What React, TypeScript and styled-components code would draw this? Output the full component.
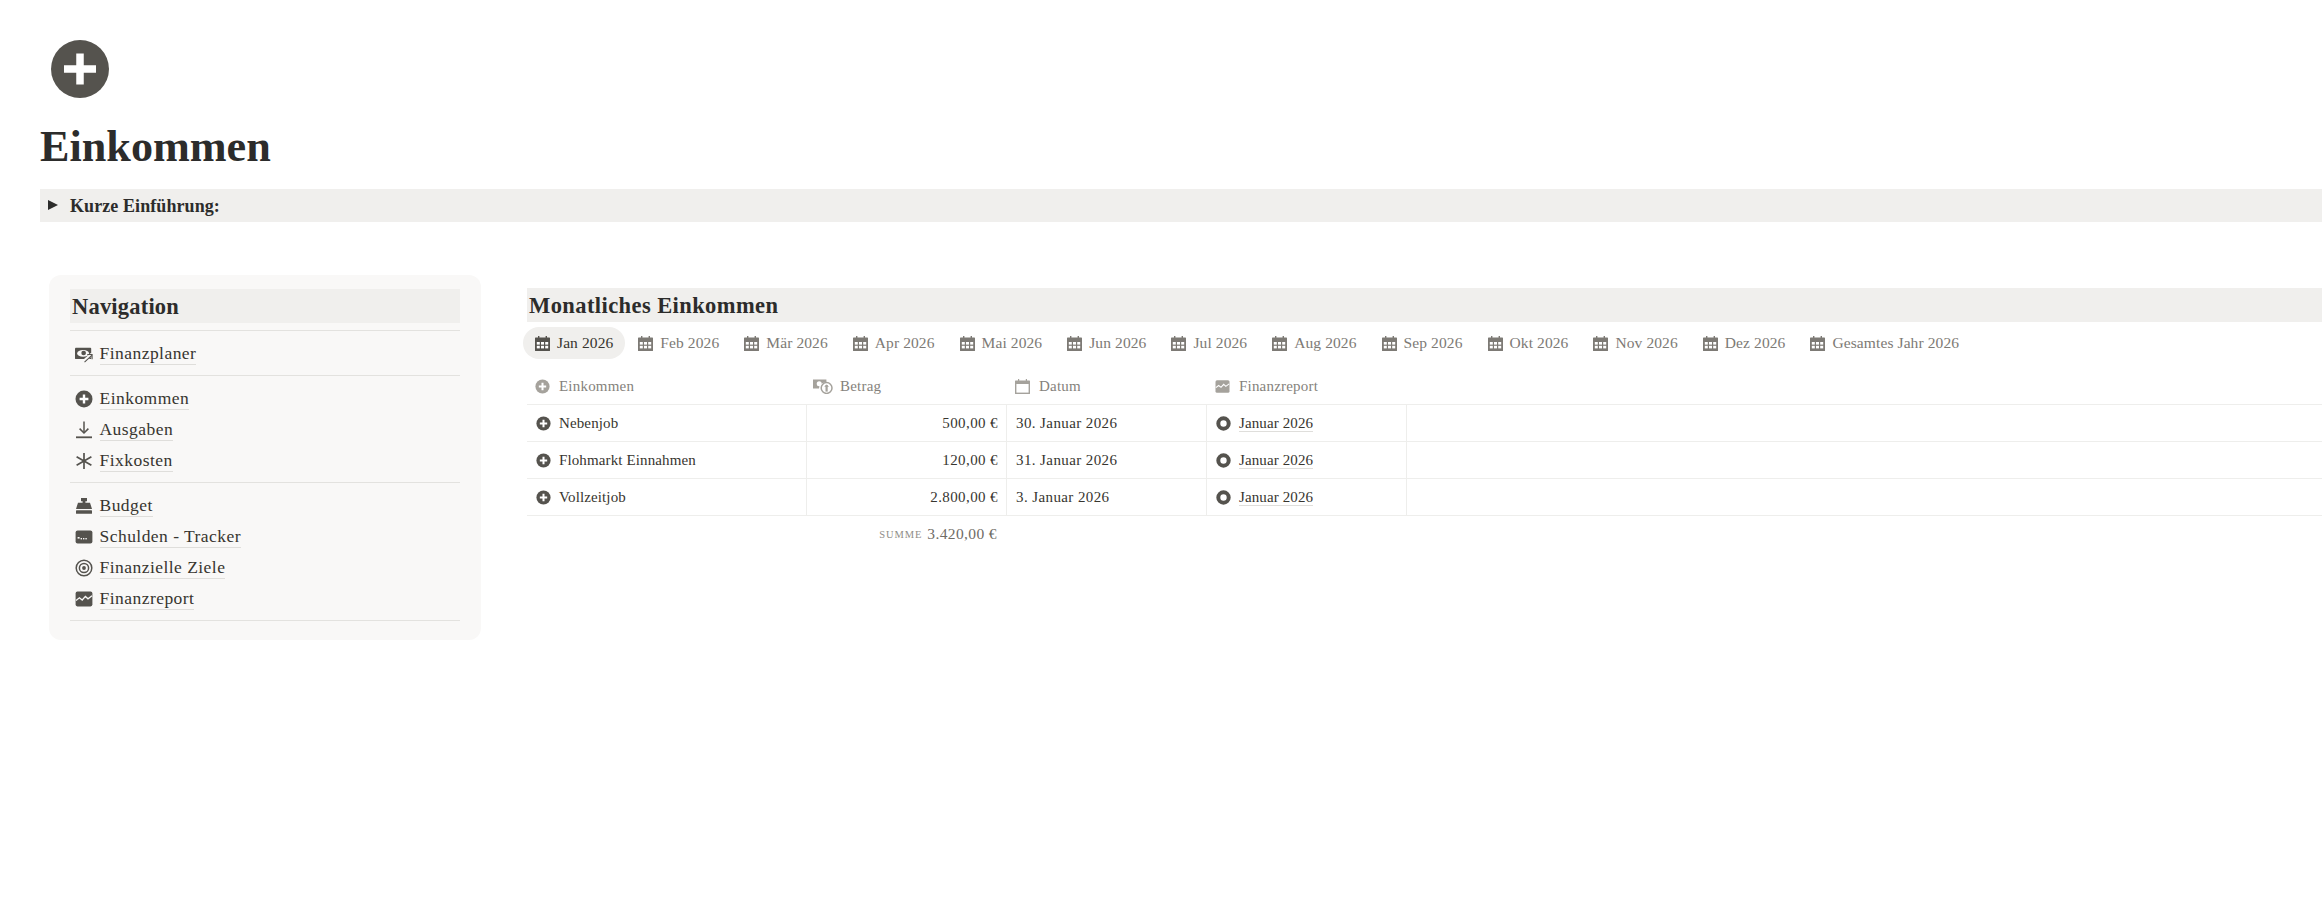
import React from "react";
import styled, { createGlobalStyle } from "styled-components";

const Global = createGlobalStyle`
  html, body { margin: 0; padding: 0; background: #fff; overflow: hidden; }
  body { font-family: "Liberation Serif", "Times New Roman", serif; color: #2c2c2b; }
`;

const Page = styled.div`
  width: 2322px; height: 912px; overflow: hidden; box-sizing: border-box;
  padding: 40px 0 0 40px; display: flex; flex-direction: column;
`;
const PageIcon = styled.div` margin-left: 11px; height: 58px; display: flex; `;
const Title = styled.h1`
  margin: 22px 0 0; font-size: 44.2px; line-height: 54px; font-weight: 700; color: #2c2c2b; height: 54px;
`;
const Callout = styled.div`
  margin-top: 15px; height: 33px; box-sizing: border-box; background: #f0efed; display: flex; align-items: center;
  padding: 2px 0 0 8px; font-size: 18px; font-weight: 700; letter-spacing: .08px; gap: 12px; color: #2c2c2b;
`;
const Triangle = styled.span`
  width: 0; height: 0; border-left: 10px solid #2c2c2b; border-top: 5.5px solid transparent; border-bottom: 5.5px solid transparent;
  margin-top: -4px;
`;
const Columns = styled.div` display: flex; margin-top: 53px; align-items: flex-start; `;
const Card = styled.aside`
  margin-left: 9px; width: 432px; height: 365px; box-sizing: border-box; background: #f9f8f7; border-radius: 12px;
  padding: 14px 21px 0; flex: none;
`;
const NavHeading = styled.h3`
  margin: 0 0 7px; height: 34px; background: #f0efed; font-size: 22.5px; line-height: 35px; font-weight: 700; padding-left: 2px; letter-spacing: .2px; color: #2c2c2b;
`;
const Rule = styled.div` height: 1px; background: #e3e2df; `;
const NavGroup = styled.div`
  display: flex; flex-direction: column; padding: 7px 0 6px;
`;
const NavRow = styled.div` height: 31px; display: flex; align-items: center; padding-left: 5px; gap: 6.5px; `;
const NavIconBox = styled.span` width: 18px; height: 18px; display: flex; flex: none; `;
const NavLink = styled.span`
  font-size: 17.5px; line-height: 21px; letter-spacing: .46px; color: #37352f; border-bottom: 1px solid #dfdedb;
`;
const Main = styled.section` margin-left: 46px; flex: 1; min-width: 0; margin-top: 13px; `;
const MainHeading = styled.h3`
  margin: 0; height: 34px; background: #f0efed; font-size: 22.5px; line-height: 35px; font-weight: 700; padding-left: 2px; letter-spacing: .42px; color: #2c2c2b;
`;
const Tabs = styled.div` display: flex; margin: 5px 0 0 -4px; height: 32px; `;
const Tab = styled.div<{ $active?: boolean }>`
  display: flex; align-items: center; height: 32px; padding: 0 12px; gap: 7px; border-radius: 16px; flex: none;
  font-size: 15.5px; letter-spacing: .1px; white-space: nowrap;
  background: ${(p) => (p.$active ? "#f0efed" : "transparent")};
  color: ${(p) => (p.$active ? "#37352f" : "#7d7a75")};
  margin-right: 1px;
`;
const Table = styled.div` margin-top: 11px; `;
const Row = styled.div<{ $head?: boolean }>`
  display: grid; grid-template-columns: 280px 200px 200px 200px 1fr;
  height: ${(p) => (p.$head ? "35px" : "37px")}; box-sizing: border-box;
  border-bottom: 1px solid #eeeeec;
`;
const HeadCell = styled.div<{ $tight?: boolean }>`
  display: flex; align-items: center; gap: ${(p) => (p.$tight ? "7px" : "9px")}; padding-left: ${(p) => (p.$tight ? "6px" : "8px")};
  color: #85827c; font-size: 15px; letter-spacing: .2px; padding-bottom: 1px;
`;
const Cell = styled.div<{ $right?: boolean; $line?: boolean; $spaced?: boolean }>`
  display: flex; align-items: center; gap: 8px; font-size: 15px; color: #37352f; padding: 0 8px 0 9px;
  letter-spacing: ${(p) => (p.$spaced ? ".4px" : ".12px")};
  justify-content: ${(p) => (p.$right ? "flex-end" : "flex-start")};
  border-right: ${(p) => (p.$line ? "1px solid #eeeeec" : "none")};
`;
const Relation = styled.span` border-bottom: 1px solid #dfdedb; line-height: 15px; padding-top: 1px; `;
const SumRow = styled.div`
  width: 479px; box-sizing: border-box; padding-right: 9px; height: 36px; display: flex; align-items: center; justify-content: flex-end; gap: 5px;
`;
const SumLabel = styled.span` font-size: 10.5px; letter-spacing: .9px; color: #908d87; text-transform: uppercase; margin-top: 1px; `;
const SumValue = styled.span` font-size: 15.5px; letter-spacing: .38px; color: #6f6c66; `;

type IP = { c?: string; s?: number };
const PlusCircle = ({ c = "#55534e", s = 18 }: IP) => (
  <svg width={s} height={s} viewBox="0 0 18 18"><circle cx="9" cy="9" r="8.5" fill={c} /><path d="M9 4.6v8.8M4.6 9h8.8" stroke="#fff" strokeWidth="2.4" /></svg>
);
const Download = ({ c = "#55534e", s = 18 }: IP) => (
  <svg width={s} height={s} viewBox="0 0 18 18" fill="none" stroke={c}><path d="M9 0.5v11" strokeWidth="1.5" /><path d="M4.6 7.6 9 12l4.4-4.4" strokeWidth="1.5" /><path d="M1 16.3h16" strokeWidth="1.8" /></svg>
);
const Asterisk = ({ c = "#55534e", s = 18 }: IP) => (
  <svg width={s} height={s} viewBox="0 0 18 18" fill="none" stroke={c} strokeWidth="1.7"><path d="M9 1v16M1.6 4.7l14.8 8.6M16.4 4.7 1.6 13.3" /></svg>
);
const Register = ({ c = "#55534e", s = 18 }: IP) => (
  <svg width={s} height={s} viewBox="0 0 18 18" fill={c}><path d="M6 1h6v3.2h-1.6v1.6H15l2 6.2H1l2-6.2h4.6V4.2H6z" /><rect x="1" y="13.2" width="16" height="3.6" rx=".6" /></svg>
);
const CreditCard = ({ c = "#55534e", s = 18 }: IP) => (
  <svg width={s} height={s} viewBox="0 0 18 18"><rect x="0.6" y="2.6" width="16.8" height="12.8" rx="2" fill={c} /><rect x="2.6" y="9" width="2" height="1.6" fill="#f9f8f7" /><rect x="5.6" y="10" width="1.4" height="1.4" fill="#f9f8f7" /><rect x="8" y="10" width="1.4" height="1.4" fill="#f9f8f7" /><rect x="10.4" y="10" width="1.4" height="1.4" fill="#f9f8f7" /></svg>
);
const Target = ({ c = "#55534e", s = 18 }: IP) => (
  <svg width={s} height={s} viewBox="0 0 18 18" fill="none" stroke={c}><circle cx="9" cy="9" r="7.8" strokeWidth="1.5" /><circle cx="9" cy="9" r="4.6" strokeWidth="1.5" /><circle cx="9" cy="9" r="1.9" fill={c} stroke="none" /></svg>
);
const Chart = ({ c = "#55534e", s = 18, bg = "#f9f8f7" }: IP & { bg?: string }) => (
  <svg width={s} height={s} viewBox="0 0 18 18"><rect x="0.6" y="1.6" width="16.8" height="14.8" rx="1.8" fill={c} /><path d="M1 10.4l3.4-2.6 2.8 2.2 3.2-3.6 2.6 2.4 4-3" fill="none" stroke={bg} strokeWidth="1.3" /></svg>
);
const Banknote = ({ c = "#55534e", s = 20 }: IP) => (
  <svg width={s} height={s} viewBox="0 0 20 20"><rect x="0" y="2" width="18" height="12.5" rx="1" fill={c} /><ellipse cx="9" cy="8.2" rx="6.6" ry="3.8" fill="#f9f8f7" /><circle cx="9.6" cy="7.8" r="2.6" fill={c} /><path d="M8 18.4 19 8.8" stroke="#f9f8f7" strokeWidth="3.4" /><path d="M10.6 18 18.6 10.4M13.6 9.4h5.4v5.4" fill="none" stroke={c} strokeWidth="1.2" /></svg>
);
const Calendar = ({ c = "#7d7a75", s = 15 }: IP) => (
  <svg width={s} height={s} viewBox="0 0 15 15"><path d="M3 0h1.4v1.6h6.2V0H12v1.6h2.4a.6.6 0 0 1 .6.6V14.4a.6.6 0 0 1-.6.6H.6a.6.6 0 0 1-.6-.6V2.2a.6.6 0 0 1 .6-.6H3z" fill={c} /><g fill="#fff"><rect x="1.8" y="6" width="3" height="2.6" /><rect x="6" y="6" width="3" height="2.6" /><rect x="10.2" y="6" width="3" height="2.6" /><rect x="1.8" y="9.8" width="3" height="2.6" /><rect x="6" y="9.8" width="3" height="2.6" /><rect x="10.2" y="9.8" width="3" height="2.6" /></g></svg>
);
const CalendarOutline = ({ c = "#a5a29c", s = 15 }: IP) => (
  <svg width={s} height={s} viewBox="0 0 15 15"><path d="M3 0h1.2v1.6h6.6V0H12v1.6h2.4a.6.6 0 0 1 .6.6V14.4a.6.6 0 0 1-.6.6H.6a.6.6 0 0 1-.6-.6V2.2a.6.6 0 0 1 .6-.6H3z" fill={c} /><rect x="1.4" y="5" width="12.2" height="8.6" fill="#fff" /></svg>
);
const CashCoin = ({ c = "#a5a29c" }: IP) => (
  <svg width="20" height="15" viewBox="0 0 20 15"><path d="M0 .6h13.4v3H12a6 6 0 0 0-6 5.8H0z" fill={c} /><circle cx="6.2" cy="4.8" r="2.5" fill="#fff" /><circle cx="13.6" cy="9" r="5.6" fill="#fff" /><circle cx="13.6" cy="9" r="5.4" fill="none" stroke={c} strokeWidth="1.5" /><path d="M13.6 6v6.6" stroke={c} strokeWidth="2.2" /><path d="M11.2 7.8 13.6 5.6 16 7.8z" fill={c} /></svg>
);
const Ring = () => (
  <svg width="15" height="15" viewBox="0 0 15 15"><circle cx="7.5" cy="7.5" r="5.2" fill="none" stroke="#55534e" strokeWidth="4" /></svg>
);

const monthTabs = ["Jan 2026", "Feb 2026", "Mär 2026", "Apr 2026", "Mai 2026", "Jun 2026", "Jul 2026", "Aug 2026", "Sep 2026", "Okt 2026", "Nov 2026", "Dez 2026", "Gesamtes Jahr 2026"];
const rows = [
  { name: "Nebenjob", amount: "500,00 €", date: "30. Januar 2026" },
  { name: "Flohmarkt Einnahmen", amount: "120,00 €", date: "31. Januar 2026" },
  { name: "Vollzeitjob", amount: "2.800,00 €", date: "3. Januar 2026" },
];
const nav = [
  [{ t: "Finanzplaner", i: <Banknote /> }],
  [{ t: "Einkommen", i: <PlusCircle /> }, { t: "Ausgaben", i: <Download /> }, { t: "Fixkosten", i: <Asterisk /> }],
  [{ t: "Budget", i: <Register /> }, { t: "Schulden - Tracker", i: <CreditCard /> }, { t: "Finanzielle Ziele", i: <Target /> }, { t: "Finanzreport", i: <Chart /> }],
];

export default function App() {
  return (
    <Page>
      <Global />
      <PageIcon>
        <svg width="58" height="58" viewBox="0 0 58 58"><circle cx="29" cy="29" r="29" fill="#55534e" /><path d="M29 13.5v31M13 29h32" stroke="#fff" strokeWidth="7.5" /></svg>
      </PageIcon>
      <Title>Einkommen</Title>
      <Callout><Triangle />Kurze Einführung:</Callout>
      <Columns>
        <Card>
          <NavHeading>Navigation</NavHeading>
          <Rule />
          {nav.map((g, i) => (
            <React.Fragment key={i}>
              <NavGroup>
                {g.map((n) => (
                  <NavRow key={n.t}>
                    <NavIconBox>{n.i}</NavIconBox>
                    <NavLink>{n.t}</NavLink>
                  </NavRow>
                ))}
              </NavGroup>
              <Rule />
            </React.Fragment>
          ))}
        </Card>
        <Main>
          <MainHeading>Monatliches Einkommen</MainHeading>
          <Tabs>
            {monthTabs.map((m, i) => (
              <Tab key={m} $active={i === 0}>
                <Calendar c={i === 0 ? "#55534e" : "#7d7a75"} />
                {m}
              </Tab>
            ))}
          </Tabs>
          <Table>
            <Row $head>
              <HeadCell><PlusCircle c="#a5a29c" s={15} />Einkommen</HeadCell>
              <HeadCell $tight><CashCoin />Betrag</HeadCell>
              <HeadCell><CalendarOutline />Datum</HeadCell>
              <HeadCell><Chart c="#a5a29c" s={15} bg="#fff" />Finanzreport</HeadCell>
              <HeadCell />
            </Row>
            {rows.map((r) => (
              <Row key={r.name}>
                <Cell $line><PlusCircle s={15} />{r.name}</Cell>
                <Cell $line $right $spaced>{r.amount}</Cell>
                <Cell $line $spaced>{r.date}</Cell>
                <Cell $line><Ring /><Relation>Januar 2026</Relation></Cell>
                <Cell />
              </Row>
            ))}
          </Table>
          <SumRow><SumLabel>Summe</SumLabel><SumValue>3.420,00 €</SumValue></SumRow>
        </Main>
      </Columns>
    </Page>
  );
}
